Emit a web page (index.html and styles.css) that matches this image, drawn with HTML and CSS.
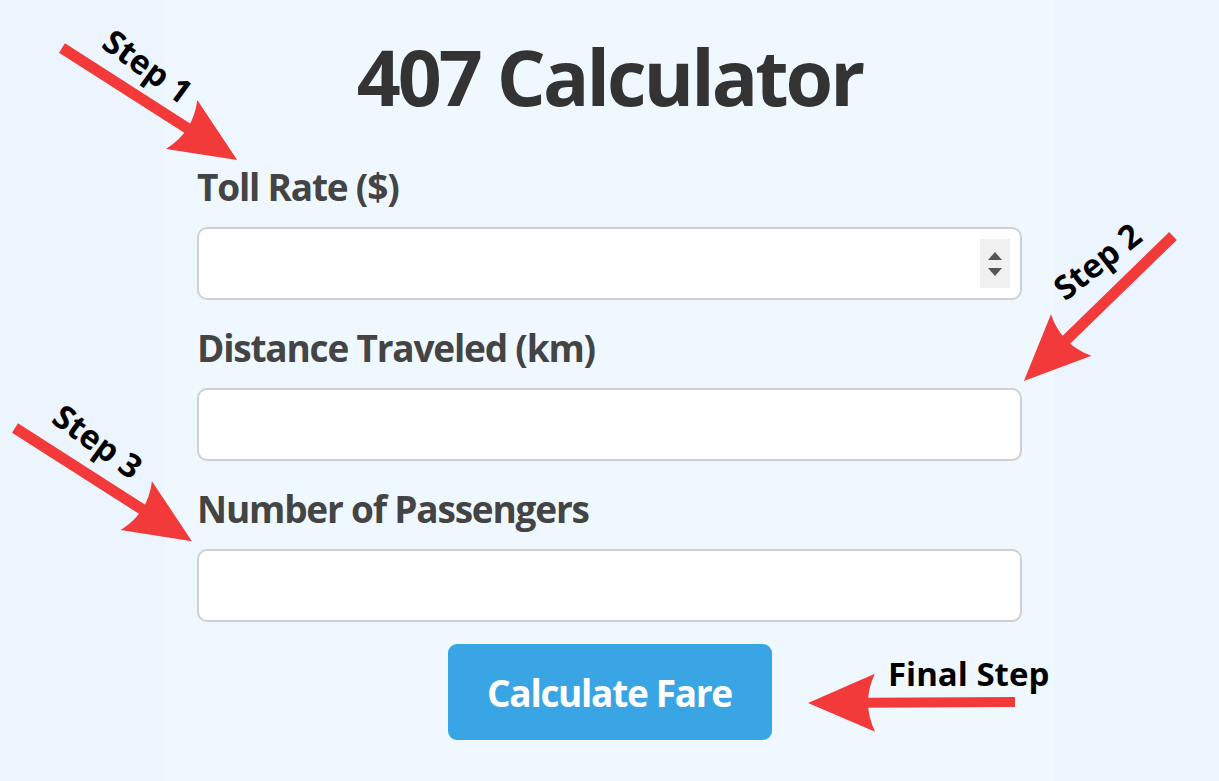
FILE: index.html
```html
<!DOCTYPE html>
<html lang="en">
<head>
  <meta charset="UTF-8">
  <meta name="viewport" content="width=device-width, initial-scale=1.0">
  <title>407 Calculator</title>
  <link rel="stylesheet" href="styles.css">
</head>
<body>
  <main class="calculator">
    <h1 class="title">407 Calculator</h1>

    <form class="fare-form">
      <div class="field">
        <label for="toll-rate">Toll Rate ($)</label>
        <div class="input-box">
          <input id="toll-rate" type="text">
          <!-- number spinner, shown as in hover state -->
          <span class="spinner">
            <span class="spin-up"></span>
            <span class="spin-down"></span>
          </span>
        </div>
      </div>

      <div class="field">
        <label for="distance">Distance Traveled (km)</label>
        <div class="input-box">
          <input id="distance" type="text">
        </div>
      </div>

      <div class="field field-last">
        <label for="passengers">Number of Passengers</label>
        <div class="input-box">
          <input id="passengers" type="text">
        </div>
      </div>

      <div class="actions">
        <button type="button" class="calc-btn">Calculate Fare</button>
      </div>
    </form>
  </main>

  <!-- red annotation arrows drawn over the form -->
  <svg class="notes" width="1219" height="781" viewBox="0 0 1219 781">
    <g class="arrow" transform="translate(62 48) rotate(32.6)">
      <rect x="0" y="-5.5" width="150" height="11"/>
      <path d="M208 0 L142 -29 Q156 0 142 29 Z"/>
    </g>
    <g class="arrow" transform="translate(1173 236) rotate(135.8)">
      <rect x="0" y="-5.5" width="150" height="11"/>
      <path d="M208 0 L142 -29 Q156 0 142 29 Z"/>
    </g>
    <g class="arrow" transform="translate(15 428) rotate(32.6)">
      <rect x="0" y="-5.5" width="152" height="11"/>
      <path d="M210 0 L144 -29 Q158 0 144 29 Z"/>
    </g>
    <g class="arrow" transform="translate(1015 702) rotate(179.7)">
      <rect x="0" y="-5" width="150" height="10"/>
      <path d="M207 0 L140 -29 Q154 0 140 29 Z"/>
    </g>

    <text class="note" text-anchor="middle" dominant-baseline="central" transform="translate(148 66) rotate(36)">Step 1</text>
    <text class="note" text-anchor="middle" dominant-baseline="central" transform="translate(1097 261) rotate(-38)">Step 2</text>
    <text class="note" text-anchor="middle" dominant-baseline="central" transform="translate(98 441) rotate(36)">Step 3</text>
    <text class="note" x="888" y="686">Final Step</text>
  </svg>
</body>
</html>
```

FILE: styles.css
```css
body {
  margin: 0;
  padding: 0;
  position: relative;
  background-color: #ecf4fd;
  font-family: "Open Sans", "DejaVu Sans", sans-serif;
}

.calculator {
  width: 891px;
  min-height: 100vh;
  margin: 0 auto;
  padding: 31px 33px 0;
  box-sizing: border-box;
  background-color: #f0f8ff;
}

.title {
  margin: 0 0 42px;
  font-size: 77px;
  line-height: 92px;
  font-weight: 700;
  letter-spacing: -3px;
  text-align: center;
  color: #333;
}

.fare-form {
  display: flex;
  flex-direction: column;
}

.field {
  display: flex;
  flex-direction: column;
  gap: 18px;
  margin-bottom: 26px;
}

.field-last {
  margin-bottom: 22px;
}

.field label {
  font-size: 37px;
  line-height: 44px;
  font-weight: 700;
  letter-spacing: -1.2px;
  color: #444;
}

.input-box {
  display: flex;
  align-items: center;
  height: 73px;
  padding: 0 10px 0 16px;
  box-sizing: border-box;
  border: 2px solid #d0d0d0;
  border-radius: 10px;
  background-color: #fff;
}

.input-box input {
  flex: 1;
  min-width: 0;
  border: none;
  outline: none;
  background: transparent;
  font-size: 30px;
  font-family: inherit;
}

.spinner {
  display: flex;
  flex-direction: column;
  align-items: center;
  justify-content: center;
  gap: 8px;
  width: 30px;
  height: 49px;
  background-color: #f0f0f0;
}

.spin-up {
  border-left: 7px solid transparent;
  border-right: 7px solid transparent;
  border-bottom: 8px solid #555;
}

.spin-down {
  border-left: 7px solid transparent;
  border-right: 7px solid transparent;
  border-top: 8px solid #555;
}

.actions {
  display: flex;
  justify-content: center;
}

.calc-btn {
  width: 324px;
  height: 96px;
  border: none;
  border-radius: 9px;
  background-color: #3aa5e4;
  color: #fff;
  font-family: inherit;
  font-size: 37px;
  font-weight: 700;
  letter-spacing: -1.3px;
  cursor: pointer;
}

.calc-btn:hover {
  background-color: #2f95d2;
}

.notes {
  position: absolute;
  top: 0;
  left: 0;
  pointer-events: none;
}

.arrow {
  fill: #f33a3a;
}

.note {
  font-family: "Open Sans", "DejaVu Sans", sans-serif;
  font-size: 33px;
  font-weight: 700;
  fill: #000;
}
```
